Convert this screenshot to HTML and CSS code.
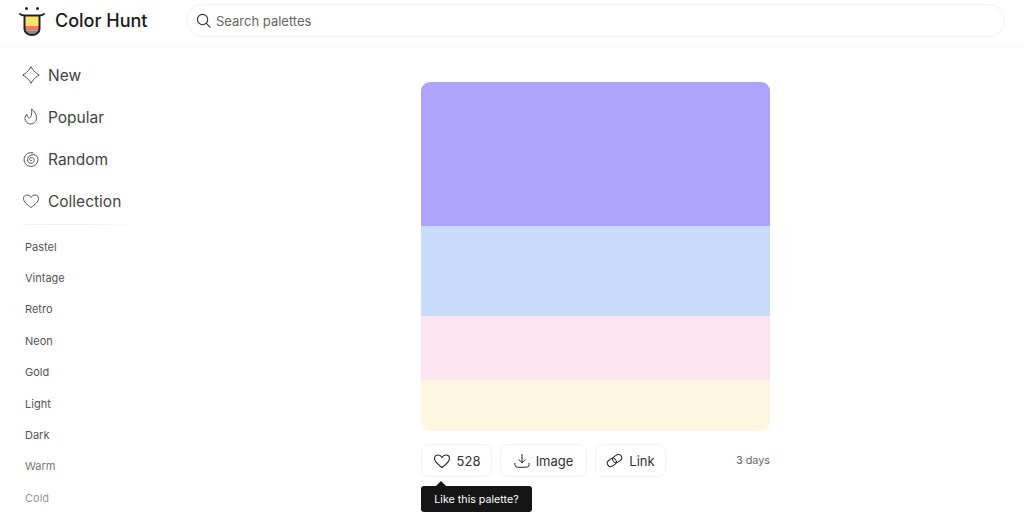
FILE: index.html
```html
<!DOCTYPE html>
<html lang="en">
<head>
<meta charset="utf-8">
<title>Color Hunt</title>
<link rel="stylesheet" href="styles.css">
</head>
<body>
<header class="header">
  <a class="brand">
    <svg class="logo" viewBox="0 0 26 30" width="26" height="30">
      <path d="M6 10h14v10h-14z" fill="#fde36a"/>
      <path d="M6 20h14v4.500h-14z" fill="#f4776d"/>
      <path d="M6 24.500h14a7 5 0 0 1-14 0z" fill="#8b8b8b"/>
      <path d="M1 8q2 1.500 4.500 1.500h15q2.500 0 4.500-1.500M5.500 9.500v13.500a7.500 6 0 0 0 15 0V9.500" fill="none" stroke="#222" stroke-width="2" stroke-linecap="round"/>
      <circle cx="7.500" cy="2.500" r="1.500" fill="#222"/>
      <circle cx="18.500" cy="2.500" r="1.500" fill="#222"/>
    </svg>
    <span class="brand-name">Color Hunt</span>
  </a>
  <label class="search">
    <svg class="search-icon" viewBox="0 0 16 16" width="15" height="15"><circle cx="7" cy="7" r="5.500" fill="none" stroke="#333" stroke-width="1.200"/><path d="M11 11l4 4" stroke="#333" stroke-width="1.200" stroke-linecap="round"/></svg>
    <span class="search-text">Search palettes</span>
  </label>
</header>
<div class="layout">
  <nav class="sidebar">
    <ul class="nav">
      <li class="nav-item">
        <svg class="nav-icon" viewBox="0 0 18 18" width="18" height="18"><path d="M9 .8c.6.6 1 1.700 2 3s3 3.300 6.200 5.200c-3.200 1.900-5.200 3.900-6.200 5.200s-1.400 2.400-2 3c-.6-.6-1-1.700-2-3S4 10.900.8 9C4 7.100 6 5.100 7 3.800S8.400 1.400 9 .8z" fill="none" stroke="#555" stroke-width="1" stroke-linejoin="round"/></svg>
        New
      </li>
      <li class="nav-item">
        <svg class="nav-icon" viewBox="0 0 18 18" width="18" height="18"><path d="M9.500 1c3.500 2.500 5 5.500 5 8.800 0 3.600-2.600 6.200-5.800 6.200S3 13.500 3 10.500C3 8.800 3.800 7.300 5 6.300c-.2 2.400 1 3.700 2.300 3.700C9 10 10.200 6 9.500 1z" fill="none" stroke="#555" stroke-width="1" stroke-linejoin="round"/></svg>
        Popular
      </li>
      <li class="nav-item">
        <svg class="nav-icon" viewBox="0 0 18 18" width="18" height="18"><path d="M11 2.800A7 7 0 1 0 16 9.500c0-3-2-4.900-4.700-4.900C8 4.600 5.500 6.800 5.500 9.800c0 2 1.500 3.400 3.500 3.400s3.300-1.400 3.300-3-1.300-2.600-2.700-2.600-2.200 1-2 2 1.400 1.400 2.200.8" fill="none" stroke="#555" stroke-width="1" stroke-linecap="round"/></svg>
        Random
      </li>
      <li class="nav-item">
        <svg class="nav-icon" viewBox="0 0 18 18" width="18" height="18"><path d="M9 15.500C5 12.500 1.500 10 1.500 6.500 1.500 4.300 3.200 3 5 3c1.700 0 3.200 1 4 2.500C9.800 4 11.300 3 13 3c1.800 0 3.500 1.300 3.500 3.500 0 3.500-3.500 6-7.500 9z" fill="none" stroke="#555" stroke-width="1" stroke-linejoin="round"/></svg>
        Collection
      </li>
    </ul>
    <hr class="nav-divider">
    <ul class="tags">
      <li class="tag">Pastel</li>
      <li class="tag">Vintage</li>
      <li class="tag">Retro</li>
      <li class="tag">Neon</li>
      <li class="tag">Gold</li>
      <li class="tag">Light</li>
      <li class="tag">Dark</li>
      <li class="tag tag-fade1">Warm</li>
      <li class="tag tag-fade2">Cold</li>
    </ul>
  </nav>
  <main class="main">
    <article class="card">
      <div class="palette">
        <div class="swatch swatch-1"></div>
        <div class="swatch swatch-2"></div>
        <div class="swatch swatch-3"></div>
        <div class="swatch swatch-4"></div>
      </div>
      <div class="actions">
        <div class="like-wrap">
          <button class="btn btn-like">
            <svg viewBox="0 0 18 18" width="18" height="18"><path d="M9 15.500C5 12.500 1.500 10 1.500 6.500 1.500 4.300 3.200 3 5 3c1.700 0 3.200 1 4 2.500C9.800 4 11.300 3 13 3c1.800 0 3.500 1.300 3.500 3.500 0 3.500-3.500 6-7.500 9z" fill="none" stroke="#222" stroke-width="1.100" stroke-linejoin="round"/></svg>
            528
          </button>
          <div class="tooltip">Like this palette?</div>
        </div>
        <button class="btn btn-image">
          <svg viewBox="0 0 18 18" width="16" height="16"><path d="M9 1.500v9.500M5.500 7.500L9 11l3.500-3.500M1 11.500v1.500a3 3 0 0 0 3 3h10a3 3 0 0 0 3-3v-1.500" fill="none" stroke="#222" stroke-width="1.100" stroke-linecap="round" stroke-linejoin="round"/></svg>
          Image
        </button>
        <button class="btn btn-link">
          <svg viewBox="0 0 18 18" width="17" height="17"><g transform="rotate(-35 9 9)" fill="none" stroke="#222" stroke-width="1"><rect x="0.500" y="5.500" width="10" height="7" rx="3.500"/><rect x="7.500" y="5.500" width="10" height="7" rx="3.500"/></g></svg>
          Link
        </button>
        <span class="age">3 days</span>
      </div>
    </article>
  </main>
</div>
</body>
</html>
```

FILE: styles.css
```css
* { box-sizing: border-box; }
html, body { height: 100%; }
body {
  margin: 0;
  background: #fff;
  color: #222;
  font-family: "Inter", "Liberation Sans", sans-serif;
  overflow: hidden;
}
ul { list-style: none; margin: 0; padding: 0; }
.header {
  display: flex;
  align-items: center;
  height: 47px;
  padding: 0 19px 5px 19px;
  border-bottom: 1px solid #f3f3f3;
}
.brand { display: flex; align-items: center; width: 167px; flex: none; }
.logo { flex: none; margin-top: 0; }
.brand-name {
  margin-left: 10px;
  font-size: 18px;
  font-weight: 500;
  color: #1a1a1a;
  white-space: nowrap;
}
.search {
  flex: 1;
  display: flex;
  align-items: center;
  height: 33px;
  padding-left: 9px;
  border: 1px solid #f1f1f1;
  border-radius: 17px;
}
.search-text { margin-left: 5px; font-size: 13px; color: #666; }
.layout { display: flex; }
.sidebar { width: 167px; flex: none; padding-top: 7px; }
.nav-item {
  display: flex;
  align-items: center;
  height: 42px;
  padding-left: 22px;
  gap: 8px;
  font-size: 15.500px;
  color: #444;
}
.nav-icon { flex: none; }
.nav-divider {
  width: 120px;
  height: 1px;
  margin: 2px 0 0 22px;
  border: 0;
  background: linear-gradient(to right, #f3f3f3, #efefef 50%, #fff);
}
.tags { padding-top: 6px; }
.tag {
  display: flex;
  align-items: center;
  height: 31.400px;
  padding-left: 25px;
  font-size: 11px;
  color: #555;
}
.tag-fade1 { color: #777; }
.tag-fade2 { color: #999; }
.main { flex: 1; display: flex; justify-content: center; padding-top: 35px; }
.card { width: 349px; }
.palette {
  display: flex;
  flex-direction: column;
  height: 349px;
  border-radius: 9px;
  overflow: hidden;
}
.swatch-1 { height: 144px; background: #ada3fb; }
.swatch-2 { height: 90px; background: #c8dcfc; }
.swatch-3 { height: 64px; background: #fbe6f0; }
.swatch-4 { height: 51px; background: #fdf6e1; }
.actions { display: flex; align-items: center; gap: 8px; margin-top: 13px; }
.like-wrap { position: relative; display: flex; }
.btn {
  display: flex;
  align-items: center;
  height: 33px;
  padding: 0;
  justify-content: center;
  gap: 6px;
  background: #fff;
  border: 1px solid #f1f1f1;
  border-radius: 8px;
  font-family: inherit;
  font-size: 13px;
  color: #333;
}
.btn-like { width: 71px; }
.btn-image { width: 87px; }
.btn-link { width: 71px; }
.age { margin-left: auto; font-size: 10.800px; color: #666; }
.tooltip {
  position: absolute;
  top: 42px;
  left: 0;
  width: 111px;
  height: 26px;
  display: flex;
  align-items: center;
  justify-content: center;
  background: #151515;
  border-radius: 3px;
  color: #fff;
  font-size: 10.700px;
  white-space: nowrap;
}
.tooltip::before {
  content: "";
  position: absolute;
  top: -5px;
  left: 15px;
  border: 5px solid transparent;
  border-top: 0;
  border-bottom-color: #151515;
}
```
